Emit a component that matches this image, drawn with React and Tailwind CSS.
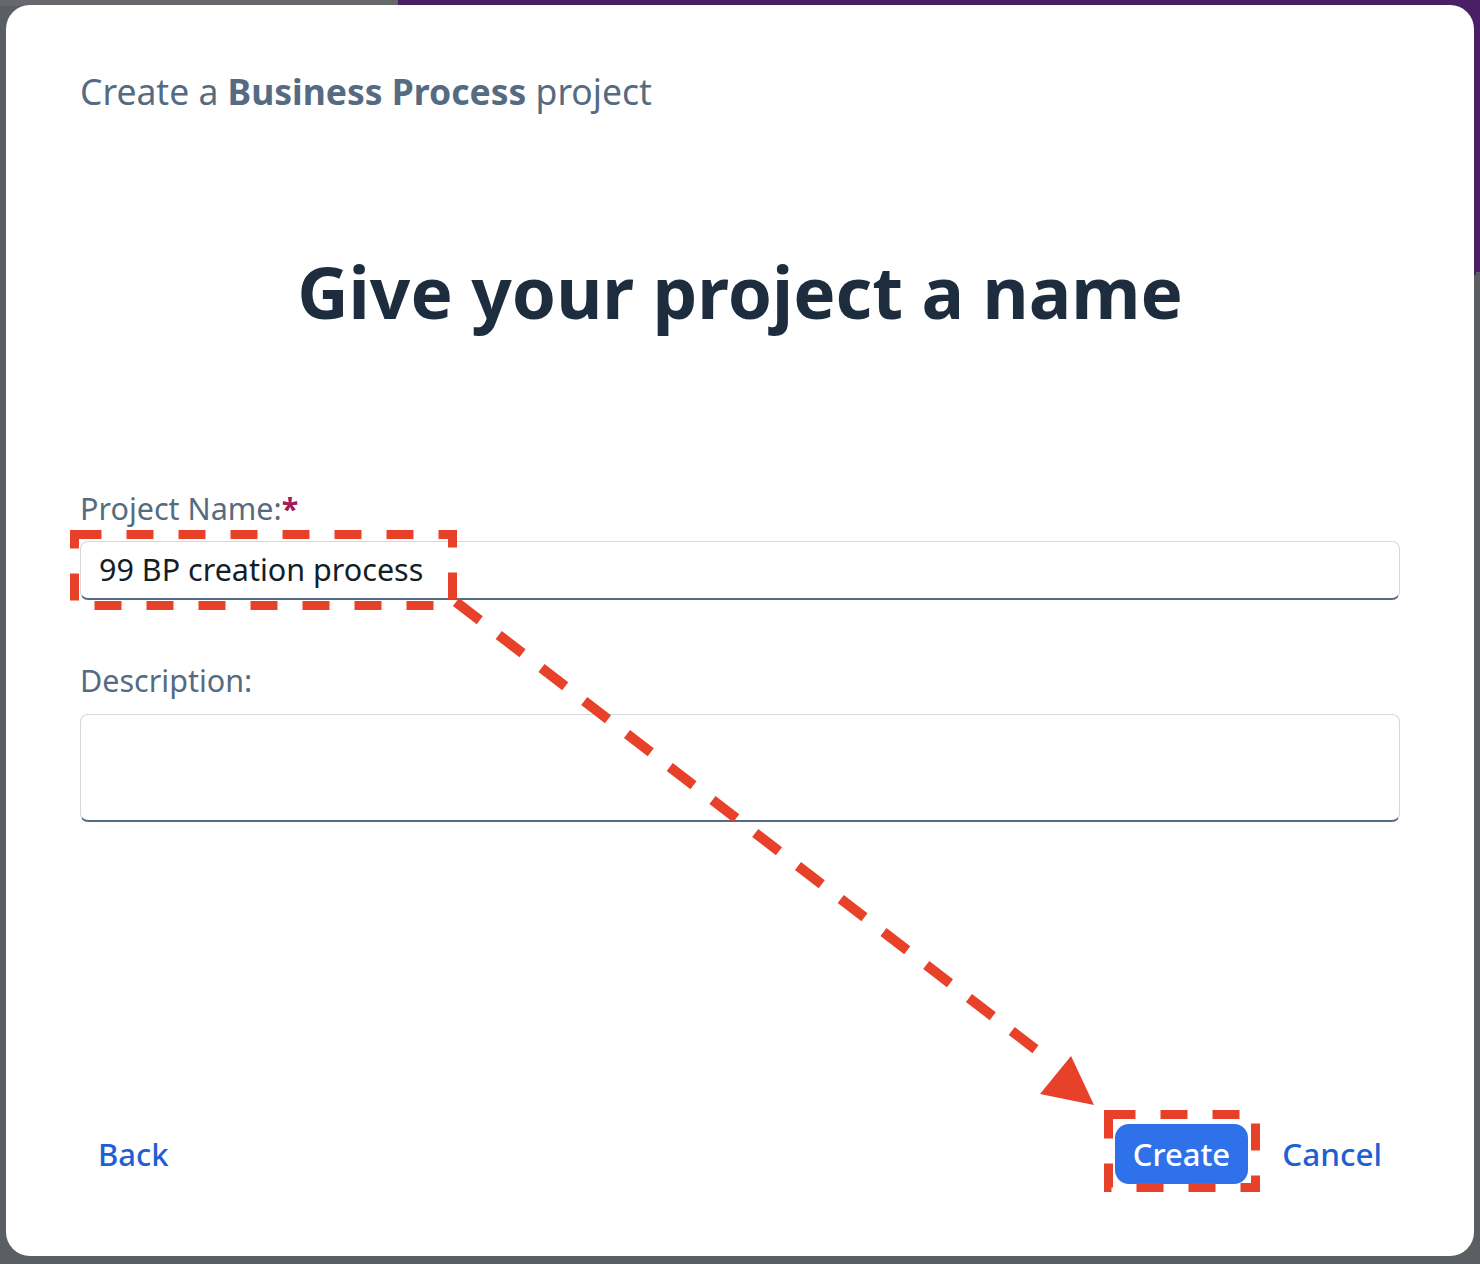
import React from "react";

export default function App() {
  return (
    <div
      className="relative w-[1480px] h-[1264px] overflow-hidden bg-[#5b5e62]"
      style={{ fontFamily: '"Noto Sans", "Open Sans", Arial, sans-serif' }}
    >
      {/* dimmed background page */}
      <div className="absolute left-[398px] top-0 w-[1082px] h-[275px] bg-[#4a1f66]" />
      <div className="absolute left-0 top-0 w-[398px] h-[6px] bg-[#66686b]" />
      <div className="absolute left-[1476px] top-[272px] w-[4px] h-[990px] bg-[#5b5e62]" />

      {/* dialog */}
      <div className="relative ml-[6px] mt-[5px] w-[1468px] h-[1251px] bg-white rounded-[24px] flex flex-col px-[74px]">
        <div className="pt-[64px] text-[35.5px] leading-[44px] text-[#556b82]">
          Create a <span className="font-bold">Business Process</span> project
        </div>

        <h1 className="mt-[137px] text-center font-bold text-[71px] leading-[84px] text-[#1d2d3e]">
          Give your project a name
        </h1>

        <div className="mt-[156px] text-[30.5px] leading-[36px] text-[#556b82]">
          Project Name:<span className="text-[#a5175f] font-bold">*</span>
        </div>
        <div className="mt-[15px] h-[59px] rounded-[8px] border border-[#d5dadf] border-b-[2px] border-b-[#556b82] flex items-center pl-[18px] text-[30.5px] text-[#131e29]">
          99 BP creation process
        </div>

        <div className="mt-[62px] text-[30.5px] leading-[36px] text-[#556b82]">
          Description:
        </div>
        <div className="mt-[16px] h-[108px] rounded-[8px] border border-[#d5dadf] border-b-[2px] border-b-[#556b82]" />

        <div className="mt-auto mb-[72px] flex items-center justify-between pl-[18px] pr-[18px]">
          <span className="text-[31px] text-[#1f5fd6] font-medium">Back</span>
          <div className="flex items-center gap-[34px]">
            <span className="h-[60px] px-[18px] rounded-[14px] bg-[#2f71e8] text-white text-[31px] font-medium flex items-center">
              Create
            </span>
            <span className="text-[31.5px] text-[#1f5fd6] font-medium">Cancel</span>
          </div>
        </div>
      </div>

      {/* red annotations */}
      <svg className="absolute left-0 top-0 pointer-events-none" width="1480" height="1264">
        <rect x="74.5" y="534.5" width="378" height="71" fill="none" stroke="#e8412a" strokeWidth="9" strokeDasharray="27 25" />
        <rect x="1108.5" y="1114.5" width="147" height="73" fill="none" stroke="#e8412a" strokeWidth="9" strokeDasharray="27 25" />
        <line x1="456" y1="602" x2="1052" y2="1062" stroke="#e8412a" strokeWidth="10" strokeDasharray="30 24" />
        <polygon points="1071,1056 1040,1094 1094,1105" fill="#e8412a" />
      </svg>
    </div>
  );
}
